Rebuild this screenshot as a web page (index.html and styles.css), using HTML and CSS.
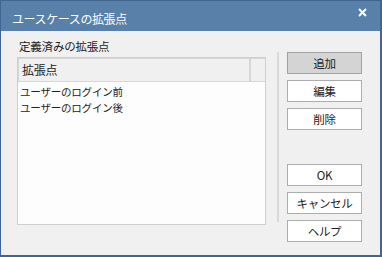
FILE: index.html
```html
<!DOCTYPE html>
<html lang="ja">
<head>
<meta charset="utf-8">
<link rel="stylesheet" href="styles.css">
</head>
<body>
<div class="window">
  <div class="titlebar">
    <span class="title">ユースケースの拡張点</span>
    <svg class="close" width="9" height="9" viewBox="0 0 9 9"><path d="M1 1L8 8M8 1L1 8" stroke="#fff" stroke-width="2" fill="none"/></svg>
  </div>
  <div class="main">
    <div class="left">
      <div class="label">定義済みの拡張点</div>
      <div class="listbox">
        <div class="header">
          <div class="hcell">拡張点</div>
          <div class="hcell hlast"></div>
        </div>
        <div class="items">
          <div class="item">ユーザーのログイン前</div>
          <div class="item">ユーザーのログイン後</div>
        </div>
      </div>
    </div>
    <div class="sep"></div>
    <div class="buttons">
      <div class="btn primary">追加</div>
      <div class="btn">編集</div>
      <div class="btn">削除</div>
      <div class="spacer"></div>
      <div class="btn">OK</div>
      <div class="btn">キャンセル</div>
      <div class="btn">ヘルプ</div>
    </div>
  </div>
</div>
</body>
</html>
```
FILE: styles.css
```css
html, body {
  margin: 0;
  padding: 0;
}
body {
  font-family: "Noto Sans CJK JP", "Noto Sans", sans-serif;
  font-size: 12px;
  color: #222;
  background: #f0f0f0;
}
.window {
  width: 382px;
  height: 257px;
  box-sizing: border-box;
  border: 1px solid #3e6690;
  border-right-width: 2px;
  border-bottom-width: 2px;
  background: #f0f0f0;
  display: flex;
  flex-direction: column;
}
.titlebar {
  height: 30px;
  flex: none;
  background: #5880a8;
  color: #fff;
  display: flex;
  align-items: center;
  justify-content: space-between;
  padding: 0 13px 0 11px;
}
.title {
  font-size: 12px;
  letter-spacing: -0.4px;
  line-height: 14px;
  margin-top: 6px;
}
.close {
  display: block;
  margin-top: -7px;
}
.main {
  display: flex;
  padding: 8px 0 0 16px;
}
.left {
  width: 249px;
  display: flex;
  flex-direction: column;
}
.label {
  line-height: 14px;
  height: 14px;
  padding-left: 2px;
  font-size: 11.5px;
  letter-spacing: -0.2px;
}
.listbox {
  margin-top: 4px;
  height: 168px;
  box-sizing: border-box;
  border: 1px solid #cfcfcf;
  background: #fdfdfd;
}
.header {
  display: flex;
  height: 24px;
  box-sizing: border-box;
  background: #f0f0f0;
  border-top: 1px solid #d6d6d6;
  border-left: 1px solid #d6d6d6;
  border-bottom: 1px solid #d6d6d6;
}
.hcell {
  flex: 1;
  line-height: 22px;
  padding-left: 3px;
  font-size: 12px;
  letter-spacing: -0.3px;
}
.hlast {
  flex: none;
  width: 14px;
  border-left: 2px solid #d6d6d6;
  padding: 0;
}
.items {
  padding: 2px 0 0 2px;
}
.item {
  line-height: 16px;
  height: 16px;
  font-size: 10.5px;
  letter-spacing: -0.2px;
}
.sep {
  width: 2px;
  height: 170px;
  margin: 13px 0 0 11px;
  background: #d9d9d9;
}
.buttons {
  display: flex;
  flex-direction: column;
  gap: 6px;
  margin: 13px 0 0 8px;
  width: 75px;
}
.btn {
  height: 22px;
  box-sizing: border-box;
  border: 1px solid #adadad;
  background: #fff;
  text-align: center;
  line-height: 20px;
  font-size: 11.5px;
  letter-spacing: -0.3px;
}
.btn.primary {
  background: #d4d4d4;
  border-color: #a2a2a2;
}
.spacer {
  height: 22px;
}
```
